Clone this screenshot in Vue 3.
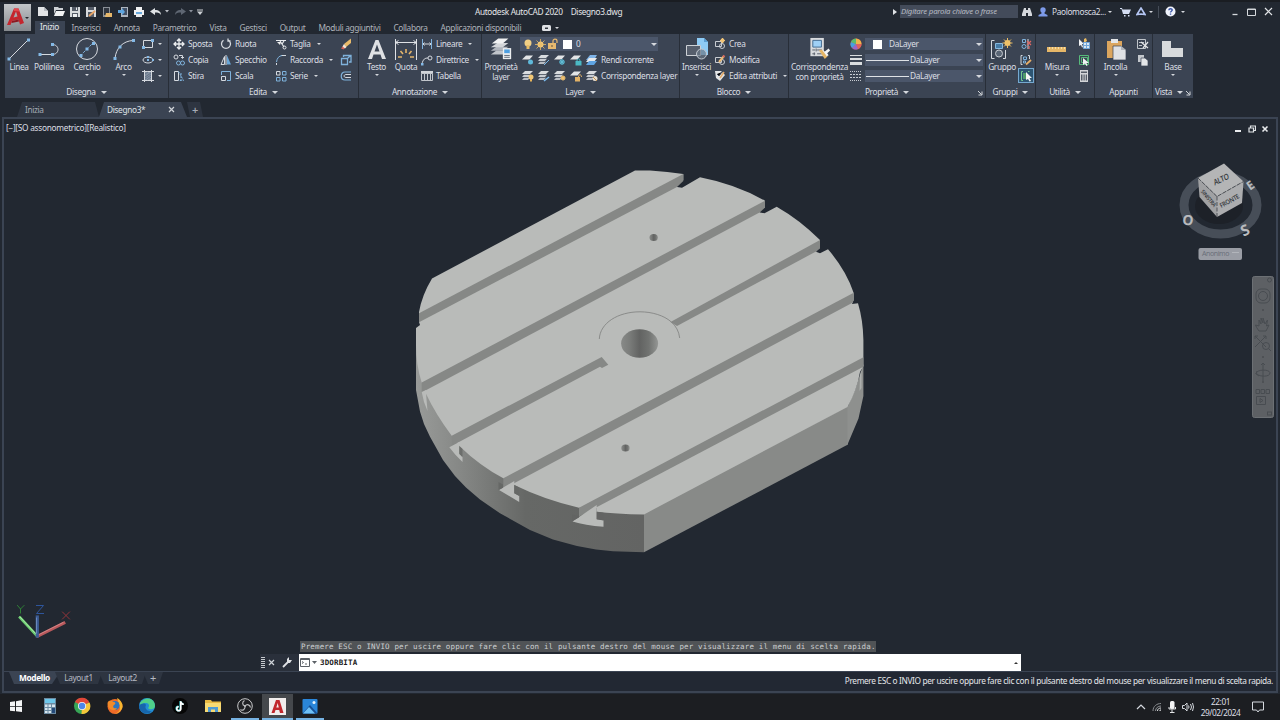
<template>
  <div class="desktop">
    <div class="window">
      <header class="titlebar">
        <div class="quick-access">
          <Icon v-for="q in quickAccess" :key="q" :name="q" :class="'qa-' + q" />
        </div>
        <div class="title">
          <span>Autodesk AutoCAD 2020</span><span>Disegno3.dwg</span>
        </div>
        <div class="search">
          <Icon name="right" />
          <div class="search-box">Digitare parola chiave o frase</div>
        </div>
        <div class="account">
          <Icon name="binoculars" />
          <Icon name="user" class="user" />
          <span class="user-name">Paolomosca2...</span>
          <i class="arrow"></i>
          <Icon name="cart" class="cart" />
          <Icon name="autodesk" class="autodesk" />
          <i class="arrow"></i>
          <i class="divider"></i>
          <Icon name="help" />
          <i class="arrow help-arrow"></i>
        </div>
        <div class="window-buttons">
          <Icon name="min" /><Icon name="max" /><Icon name="close" />
        </div>
      </header>
      <div class="app-button">
        <Icon name="logo" /><i class="arrow"></i>
      </div>

      <nav class="ribbon-tabs">
        <span
          v-for="(t, i) in tabs"
          :key="t"
          class="ribbon-tab"
          :class="{ active: i === 0 }"
          >{{ t }}</span
        >
        <Icon name="camera" class="camera" /><i class="arrow"></i>
      </nav>

      <div class="ribbon">
        <section v-for="p in panels" :key="p.id" class="panel" :class="p.id">
          <div class="panel-body">
            <template v-for="(c, i) in p.cols" :key="i">
              <div v-if="c.big" class="big" :class="'big-' + c.big">
                <Icon :name="c.big" />
                <span v-for="l in c.labels" :key="l" class="label">{{ l }}</span>
                <i v-if="c.arrow" class="arrow"></i>
              </div>
              <div v-else-if="c.rows" class="small" :class="c.id">
                <div
                  v-for="r in c.rows"
                  :key="r[0]"
                  class="row"
                  :class="{ selected: r[3] }"
                >
                  <Icon :name="r[0]" />
                  <span v-if="r[1]" class="label">{{ r[1] }}</span>
                  <i v-if="r[2]" class="arrow"></i>
                </div>
              </div>
              <div v-else-if="c.layers" class="layer-tools">
                <div class="select layer-select">
                  <Icon name="bulb" /><Icon name="sun" /><Icon name="unlock" />
                  <i class="swatch"></i><span>0</span><i class="arrow wide"></i>
                </div>
                <div v-for="r in c.layers" :key="r.label" class="row">
                  <Icon v-for="n in r.icons" :key="n" :name="n" />
                  <span class="label">{{ r.label }}</span>
                </div>
              </div>
              <div v-else class="props">
                <div class="row">
                  <Icon name="wheel" />
                  <div class="select">
                    <i class="swatch"></i><span>DaLayer</span
                    ><i class="arrow wide"></i>
                  </div>
                </div>
                <div v-for="n in ['weights', 'dashes']" :key="n" class="row">
                  <Icon :name="n" />
                  <div class="select">
                    <i class="stroke"></i><span>DaLayer</span
                    ><i class="arrow wide"></i>
                  </div>
                </div>
              </div>
            </template>
          </div>
          <div class="panel-title">
            <span>{{ p.title }}</span>
            <i v-if="p.menu" class="arrow wide"></i>
            <Icon v-if="p.launcher" name="launcher" class="launcher" />
          </div>
        </section>
      </div>

      <div class="doc-tabs">
        <div class="doc-tab">Inizia</div>
        <div class="doc-tab current">
          <span>Disegno3*</span><Icon name="tabClose" />
        </div>
        <div class="doc-tab add">+</div>
      </div>

      <main class="canvas">
        <div class="view-label">[−][SO assonometrico][Realistico]</div>
        <div class="view-buttons">
          <Icon name="viewMin" /><Icon name="viewRestore" /><Icon name="viewClose" />
        </div>

        <svg class="model" viewBox="416 169 448 385" width="448" height="385">
          <defs>
            <linearGradient id="rim" gradientUnits="userSpaceOnUse" x1="416" y1="0" x2="644" y2="0">
              <stop offset="0" stop-color="#999b99" />
              <stop offset="0.2" stop-color="#858785" />
              <stop offset="0.48" stop-color="#666866" />
              <stop offset="1" stop-color="#636463" />
            </linearGradient>
            <linearGradient id="bore">
              <stop offset="0" stop-color="#888a88" />
              <stop offset="0.22" stop-color="#7b7d7b" />
              <stop offset="0.5" stop-color="#626362" />
              <stop offset="0.75" stop-color="#717371" />
              <stop offset="1" stop-color="#949694" />
            </linearGradient>
          </defs>
          <!-- curved rim and flat cut side -->
          <path fill="url(#rim)" d="M416 340V390L420 411.500L424 424L430 436.700L443 460L455 476L466 487.500L480 499.500L500 513.300L530 530L553 539.500L577 546L596 549.500L613 551.300L644 552.300V505L500 440Z" />
          <path fill="#888a88" d="M644 513L848 406V444.500L644 552.300Z" />
          <path fill="#8e908e" d="M847.500 407L855 390L863.400 364V396L858.500 418.500L847.500 444.500Z" />
          <!-- top face -->
          <path fill="#b9bbb9" d="M432 278.500L635 170.500H650Q668 171.500 683.300 174V180L677 184.700V187L682 187.700L700 177.300Q735 184 765 200.700V207L760 210V212.500L764.500 213.300L776.700 206.700Q800 220 820 240V247L816 251.700L820 253.300L828 249.300Q846 270 853.700 293V300L852 304L858 303.300Q863 320 863.400 340V366L860 372Q857 390 847.500 407L644 514.400Q615 514 596.700 511.700V508L579 507.700Q545 500 514.300 485L503.300 478.300Q480 466 459.300 446L451.700 435.700Q436 415 425.700 393.300L421.700 382.500Q416 365 416 345V328L420 325L419 322V312Q422 295 432 278.500Z" />
          <!-- slot walls -->
          <g fill="#868886">
            <path d="M419 313.300L683.300 174V181L677 187L419 322.300Z" />
            <path d="M421.700 382.500L765 200.700V207.500L760 212.300L421.700 392.500Z" />
            <path d="M670.500 322L820 240V248.500L816 251.500L677 326Z" />
            <path d="M451.700 435.700L601.700 357L608.300 364.700L602 368L600 366.700L452 445.700Z" />
            <path d="M503.300 478.300L853.700 292.700V300.500L852 303L503.300 489Z" />
            <path d="M579 507.700L863.400 357.300V366.700L579 516.500Z" />
          </g>
          <!-- T-slot mouths on the rim -->
          <path fill="#b9bbb9" d="M421.700 392L426 390L426.300 397L427.500 411L424 402Z" />
          <path fill="#b9bbb9" d="M449.300 447.300L459.300 442V453.500L462.500 456.500V462Q455 455 449.300 447.300Z" />
          <path fill="#6c6e6c" d="M459.300 446L462.500 449V457.300L459.300 454Z" />
          <path fill="#b9bbb9" d="M499 490L514.300 481V493.300L519.200 495.700V502Z" />
          <path fill="#666866" d="M514.300 485L519.200 487.500V495.900L514.300 493.300ZM498.500 482L503 484.500V487.700L498.500 490Z" />
          <path fill="#b9bbb9" d="M572.500 521.500L596.700 505V519.300L603.500 520.300V526.700Q585 525.500 572.500 521.500Z" />
          <path fill="#636463" d="M596.700 511.700L603.500 512.700V520.500L596.700 519.300ZM572.300 514.500L579 516V517.500L572.300 521Z" />
          <path fill="#c2c4c2" d="M860 375L861.500 370V388L859.500 391Z" opacity=".6" />
          <!-- centre bore and boss -->
          <path fill="none" stroke="#7d7f7d" stroke-width=".8" d="M599.300 339C600 323 618 311.800 640 311.800C652 311.800 664 315.500 671 321.700Q678.500 328 679.700 338" />
          <ellipse cx="639.600" cy="343.500" rx="18.500" ry="14.300" fill="url(#bore)" />
          <ellipse cx="653.700" cy="237.500" rx="4.200" ry="3.500" fill="url(#bore)" />
          <ellipse cx="625.500" cy="448" rx="4.200" ry="3.500" fill="url(#bore)" />
        </svg>

        <svg class="viewcube" viewBox="1176 160 90 104" width="90" height="104">
          <ellipse cx="1220.500" cy="205" rx="36.500" ry="29" fill="none" stroke="#474e58" stroke-width="9" />
          <ellipse cx="1219" cy="206" rx="24" ry="18" fill="#1d2128" />
          <path fill="#b4b5b6" d="M1198 178L1224 163.500L1243.500 181.500L1217 196.500Z" />
          <path fill="#a0a1a3" d="M1198 178L1217 196.500V217L1199.500 197Z" />
          <path fill="#acadaf" d="M1217 196.500L1243.500 181.500L1242 203L1217 217Z" />
          <path fill="none" stroke="#3c4046" stroke-width=".8" stroke-dasharray="4 1.500" d="M1198 178L1217 196.500L1243.500 181.500M1217 196.500V217" />
          <g font-family="Open Sans, sans-serif" fill="#33373c" text-anchor="middle">
            <text font-size="8" font-weight="600" transform="translate(1222 182) rotate(-26) skewX(-8)" textLength="16" lengthAdjust="spacingAndGlyphs">ALTO</text>
            <text font-size="6.500" font-weight="600" transform="translate(1230.500 203) rotate(-29)" textLength="21" lengthAdjust="spacingAndGlyphs">FRONTE</text>
            <text font-size="5.500" font-weight="600" transform="translate(1207 199.500) rotate(50)" textLength="20" lengthAdjust="spacingAndGlyphs">SINISTRA</text>
          </g>
          <g font-family="Open Sans, sans-serif" fill="#b9bbbe" font-weight="700" text-anchor="middle">
            <text font-size="14" transform="translate(1187 225) rotate(8)">O</text>
            <text font-size="15" transform="translate(1247 235) rotate(-25)">S</text>
            <text font-size="12" transform="translate(1252.500 189) rotate(-35)">E</text>
          </g>
          <rect x="1198.500" y="248" width="43.500" height="12" rx="2" fill="#9a9da5" />
          <text x="1202" y="256.300" font-family="Open Sans, sans-serif" font-size="7" fill="#686d78" textLength="27">Anonimo</text>
          <path d="M1232 252.500h7" stroke="#b2b5bb" />
        </svg>

        <svg class="navbar" viewBox="0 0 22 142" width="22" height="142" fill="none" stroke="#484c51">
          <rect x=".5" y=".5" width="21" height="141" rx="2" fill="#5d6064" stroke="#6c7074" />
          <circle cx="17.500" cy="4" r="2" />
          <rect x="4" y="13" width="14" height="14" rx="5" />
          <circle cx="11" cy="20" r="4.500" />
          <path d="M7 55Q4 51 3.500 49L7 50V44L9 48V42L11 47V42L13 48L15.500 44L14.500 50L17 49L14 55Z" />
          <path d="M3 60L14 71M3 71L14 60M3 63V60H6M11 60H14V63" />
          <circle cx="14" cy="70" r="3.500" /><path d="M16.500 72.500L19 75" />
          <path d="M11 87V105M4 98C4 93 18 93 18 97S8 101 5 98M9 89L11 87L13 89M5 95L4 98L7 100" />
          <path d="M4 113.500h3.500v4H4zM9 113.500h3.500v4H9zM14 113.500h3.500v4H14zM4.500 120.500h9v8h-9zM8 122.500l3 2-3 2z" />
          <path d="M10.500 34h1M10.500 81h1M10.500 106h1" stroke="#35393f" stroke-width="1.500" />
          <rect x="15.500" y="136" width="4" height="3" />
        </svg>

        <svg class="ucs" viewBox="14 600 60 40" width="60" height="40">
          <g fill="none" stroke-linecap="square">
            <path d="M20 617.500L37 636" stroke="#6fce73" stroke-width="2.600" />
            <path d="M20 617L36 634" stroke="#b2f0b0" stroke-width=".8" />
            <path d="M38 636L64 623" stroke="#b9595c" stroke-width="2.800" />
            <path d="M38 635L63 622.500" stroke="#e0999a" stroke-width=".7" />
            <path d="M37.300 617V636" stroke="#3c5c96" stroke-width="3.200" />
            <path d="M36.500 618V633" stroke="#7e9ccc" stroke-width=".7" />
            <path d="M17.500 605.500L20.500 609L24 605.500M20.500 609V613" stroke="#2f7f36" />
            <path d="M36.500 605.500H43.500L36.500 613.500H43.500" stroke="#2e559b" />
            <path d="M62.500 612L69.500 619M69.500 612L62.500 619" stroke="#93343a" />
          </g>
        </svg>

        <div class="command">
          <div class="history">Premere ESC o INVIO per uscire oppure fare clic con il pulsante destro del mouse per visualizzare il menu di scelta rapida.</div>
          <div class="command-line">
            <div class="handle"><i class="grip"></i><Icon name="tabClose" /><Icon name="wrench" /></div>
            <div class="prompt"><Icon name="console" /><span>3DORBITA</span><i class="up"></i></div>
          </div>
        </div>
      </main>

      <footer class="statusbar">
        <div class="layout-tabs">
          <span class="layout-tab current">Modello</span>
          <span class="layout-tab">Layout1</span>
          <span class="layout-tab">Layout2</span>
          <span class="layout-tab plus">+</span>
        </div>
        <div class="hint">Premere ESC o INVIO per uscire oppure fare clic con il pulsante destro del mouse per visualizzare il menu di scelta rapida.</div>
      </footer>
    </div>

    <div class="taskbar">
      <div
        v-for="t in tasks"
        :key="t.icon"
        class="task"
        :class="{ open: t.open, focused: t.focused }"
      >
        <Icon :name="t.icon" />
      </div>
      <div class="tray">
        <Icon name="chevron" /><Icon name="wifi" /><Icon name="mic" /><Icon name="speaker" />
        <div class="clock"><span>22:01</span><span>29/02/2024</span></div>
        <Icon name="notify" />
      </div>
    </div>
  </div>
</template>

<script setup>
import { h } from "vue";

const S = 'fill="none" stroke="#d5d9df"';
const B = 'fill="none" stroke="#7fb2dc"';
const sheets = '<path fill="#d9dcdf" d="M3 1h8L8 4H0z"/><path fill="#c9cdd3" d="M2 4.800h7L7 7H0z"/><path fill="#b9bdc4" d="M2 7.800h6L6 10H0z"/>';
const oneSheet = '<path fill="#e3e5e7" d="M4 1.500h7L7.500 5.500H0z"/>';
const blockBase = '<path fill="none" stroke="#c8ccd2" d="M1.500 3.500h6v5h-6z"/><circle cx="8" cy="8" r="2.500" fill="none" stroke="#c8ccd2"/>';
const pencil = '<path d="M5 8L10 2" stroke="#e8bb78" stroke-width="2"/><path d="M9 3l1.500-1.500" stroke="#d9685f" stroke-width="2"/>';

// name: [width, height, markup]
const icons = {
  logo: [20, 24, '<path fill="#c4262e" d="M2 19L9 2.500h4.500L19 17l-4 1.500-1.500-5L7 15l-1.500 4zM8.500 11.500l4-1L11 5.500z"/><path fill="#e2474c" d="M9 2.500h4.500l1 3L9 5z"/><path fill="#8e1820" d="M7 15l6.500-1.500.500 2L6.500 17z"/>'],
  right: [4, 6, '<path fill="#dfe2e6" d="M0 0l4 3-4 3z"/>'],
  new: [12, 11, '<path fill="#e2e4e6" d="M1 1h6l4 4v5H1z"/><path fill="#b8bcc2" d="M7 1v4h4z"/>'],
  open: [12, 11, '<path fill="#cdd0d4" d="M1 1h4l1 1h4v2H3L1 8z"/><path fill="#f0f1f2" d="M3 5h9l-2 5H1z"/>'],
  save: [12, 12, '<path fill="#d7dadd" d="M1 1h10v10H1z"/><path fill="#545b67" d="M3 1h6v4H3zM3 7h6v4H3z"/><path fill="#eceef0" d="M4 8h4v3H4zM7 1.500h1v2.500H7z"/>'],
  saveas: [12, 12, '<path fill="#d7dadd" d="M1 1h10v10H1z"/><path fill="#545b67" d="M3 1h6v3H3zM3 6h6v5H3z"/><path d="M4 10l6-5" stroke="#e6a467" stroke-width="2"/>'],
  fromweb: [12, 12, '<path fill="#8a8f97" d="M2 1h7v10H2z"/><path fill="#303640" d="M3 2h5v7H3z"/><path fill="#e6b76a" d="M5 7h6v4H4z"/>'],
  toweb: [12, 12, '<path fill="#aeb5bf" d="M4 1h7v10H4z"/><path fill="#415066" d="M5 2h5v7H5z"/><path fill="#5fa6e0" d="M1 4h4V2l3 4-3 3V7H1z"/>'],
  print: [12, 12, '<path fill="#f1f2f3" d="M3 1h6v3H3zM1 4h10v5H1z"/><path fill="#68a9dc" d="M3 6h6v4H3z"/><path fill="#e9ebed" d="M3 8h6v3H3z"/>'],
  undo: [12, 10, '<path fill="#dfe2e5" d="M0 4.500L5 1v2c4 0 6 2 6 5C10 6 8 5.500 5 5.500V8z"/>'],
  redo: [12, 10, '<path fill="#5e6672" d="M12 4.500L7 1v2C3 3 1 5 1 8c1-2 3-2.500 6-2.500V8z"/>'],
  drop: [4, 3, '<path fill="#b9bdc4" d="M0 0h4L2 2.500z"/>'],
  drop2: [4, 3, '<path fill="#8b919b" d="M0 0h4L2 2.500z"/>'],
  more: [6, 6, '<path stroke="#ced1d6" d="M0 1h6"/><path fill="#ced1d6" d="M0 2.500h6L3 6z"/>'],
  binoculars: [10, 10, '<path fill="#d5d8dd" d="M2 1h2v2h2V1h2l2 6v2H6V6H4v3H0V7z"/>'],
  user: [10, 10, '<circle cx="5" cy="3" r="2.700" fill="#7d9ae8"/><path fill="#7d9ae8" d="M3.500 5h3v1.500L9.500 8v1.500H.500V8l3-1.500z"/>'],
  cart: [11, 10, '<path fill="#d5def2" d="M0 1h2l.500 1.500H11L9 7H3L1.500 2H0zM4 8h1.500v1.500H4zM8 8h1.500v1.500H8z"/>'],
  autodesk: [10, 9, '<path fill="none" stroke="#b5c6f3" stroke-width="1.600" d="M1 7.500L5 1l4 6.500L5 7z"/>'],
  help: [11, 11, '<circle cx="5.500" cy="5.500" r="5" fill="#f0f3fb"/><path fill="none" stroke="#3a56a8" stroke-width="1.400" d="M3.800 4.200C4 2.200 7.300 2.300 7.200 4.200 7 5.300 5.500 5.300 5.500 6.600M5.500 7.600v1.200"/>'],
  min: [8, 8, '<path stroke="#d5d8dc" stroke-width="1.300" d="M1.500 6.500h5"/>'],
  max: [9, 8, '<path fill="none" stroke="#d5d8dc" d="M.500 1h8v6.500h-8zM.500 1.500h8"/>'],
  close: [9, 9, '<path stroke="#e3e5e8" stroke-width="1.200" d="M1 1l7 7M8 1L1 8"/>'],
  camera: [9, 6, '<rect width="9" height="6" rx="1.500" fill="#dfe1e5"/><path fill="#30363f" d="M3 2.500h3v1.500H3z"/>'],
  line: [24, 24, `<path ${S} d="M2 22L21 3"/><path fill="#84b9e6" d="M.500 20.500h3v3h-3zM20 1.500h3v3h-3z"/>`],
  polyline: [24, 24, `<path ${S} d="M3 17.500h12c8 0 8-10 0-10"/><path fill="#84b9e6" d="M1.500 16h3v3h-3zM14 16h3v3h-3zM14 6h3v3h-3z"/>`],
  circle: [24, 24, `<circle cx="12" cy="12" r="10.500" ${S}/><path ${B} stroke-dasharray="3 1.500" d="M5 19L19 5"/><path fill="#84b9e6" d="M10.500 10.500h3v3h-3zM17 5h3v3h-3zM4.500 17h3v3h-3z"/>`],
  arc: [24, 24, `<path ${S} d="M3 21.500C4 11 11 4 21 3.500"/><path fill="#84b9e6" d="M1.500 20h3v3h-3zM6.500 8.500h3v3h-3zM20 2h3v3h-3z"/>`],
  rect: [12, 12, `<path ${S} d="M1.500 2.500h9v7h-9z"/><path fill="#84b9e6" d="M0 8h3v3H0zM9 1h3v3H9z"/>`],
  ellipse: [12, 12, `<ellipse cx="6" cy="6" rx="5" ry="3" ${S}/><path fill="#84b9e6" d="M5 5h2v2H5zM5 2h2v2H5zM10 5h2v2h-2z"/>`],
  hatch: [12, 12, `<path fill="#8592a3" d="M3 2h6v8H3z"/><path ${S} d="M2.500 0v12M9.500 0v12M0 1.500h12M0 10.500h12"/><path stroke="#56657a" stroke-width=".7" d="M3 4l3-2M3 7l6-4M3 9l6-4M5 10l4-3"/>`],
  move: [12, 12, '<path fill="none" stroke="#eceef0" stroke-width="1.300" d="M6 1v10M1 6h10M4 3l2-2 2 2M4 9l2 2 2-2M3 4L1 6l2 2M9 4l2 2-2 2"/>'],
  copy: [12, 12, `<circle cx="3" cy="3" r="2" ${S}/><path ${S} d="M6 1.500h3.500V4M8 3l1.500 1.500L11 3"/><circle cx="5.500" cy="9" r="2" ${B}/><circle cx="9.500" cy="9" r="2" ${B}/>`],
  stretch: [12, 12, `<path ${S} d="M1.500 1.500h4v9h-4z"/><path ${B} stroke-dasharray="2 1" d="M5.500 1.500l5 9h-5M8 3v7"/>`],
  rotate: [12, 12, `<path ${S} stroke-width="1.300" d="M8.500 2.200A4.500 4.500 0 1 1 3.500 2.200M8 .500v2.500h2.500"/>`],
  mirror: [12, 12, `<path ${S} d="M4.500 2.500v8H1z"/><path fill="#68a6d8" d="M7 1.500v9h4z"/><path fill="#e1e4e8" d="M5.500 1h1v10h-1z"/>`],
  scale: [12, 12, `<path ${S} d="M1.500 6.500h4v4h-4z"/><path ${B} d="M1.500 5V1.500h9v9H7"/>`],
  trim: [12, 12, '<path fill="none" stroke="#e9ebee" stroke-width="1.200" d="M1 2.500h10M5 3l4 6M9 3L7 6"/><circle cx="9.500" cy="9.500" r="1.500" fill="none" stroke="#e9ebee"/><path fill="#eee" d="M2 4h4l-1 3z"/>'],
  fillet: [12, 12, `<path ${S} d="M1.500 11V9M6 1.500h5"/><path ${B} d="M1.500 8C2 4 4 2 7 1.500"/>`],
  array: [12, 12, `<path ${S} d="M1.500 1.500h3.500v3.500h-3.500z"/><path ${B} d="M7.500 1.500H11V5H7.500zM1.500 7.500H5V11H1.500zM7.500 7.500H11V11H7.500z"/>`],
  erase: [12, 12, '<path fill="#e9bb6a" d="M4 6L11 .500V5L6 9z"/><path fill="#d86458" d="M1 10.500L3 8l2 2-1.500 1.500z"/><path fill="#f6e6d5" d="M2.500 8.500L4 6 6.500 9 5 10.500z"/>'],
  explode: [12, 12, `<path ${B} stroke-width="1.300" d="M1.500 4.500h6v6h-6zM3.500 3V1.500H11V8H9M7.500 4.500l3-3"/>`],
  offset: [12, 12, `<path ${B} stroke-width="1.200" d="M11 2H5C0 2 0 10 5 10h6"/><path ${S} d="M11 4.500H6C3.500 4.500 3.500 7.500 6 7.500h5"/>`],
  text: [24, 24, '<path fill="#dfe1e4" d="M3 22L10.500 3h3L21 22h-4l-1.500-4.500h-7L7 22zM9.500 14.500h5L12 7.500z"/>'],
  dim: [24, 24, '<path fill="none" stroke="#dfe2e6" d="M1.500 2v21M22.500 2v21M2 5.500h20M4.500 3.500l-3 2 3 2M19.500 3.500l3 2-3 2"/><path stroke="#e5b56b" stroke-width="1.600" d="M12 12v4M6.500 14l2.500 3M17.500 14L15 17M4 20h4M16 20h4"/>'],
  linear: [12, 12, `<path ${B} d="M1.500 1v10M10.500 1v10"/><path ${S} d="M2 6h8M3.500 4.500L2 6l1.500 1.500M8.500 4.500L10 6 8.500 7.500"/>`],
  leader: [12, 12, `<path ${S} d="M1 10C2 5 4 4 7 4"/><circle cx="9" cy="4" r="2" ${S}/><path fill="#84b9e6" d="M0 9h2.500v2.500H0z"/>`],
  table: [12, 12, '<path fill="#cfd3d8" d="M0 1h12v2.500H0z"/><path fill="none" stroke="#c1c5cb" d="M.500 3.500h11v7h-11zM3.500 4v7M6.500 4v7M9.500 4v7"/>'],
  layerprops: [24, 26, '<path fill="#c0c4ca" d="M7 14.500h13l-5 4.500H1z"/><path fill="#b0b5bd" d="M7 10.500h13L14 15H1z"/><path fill="#d2d5d9" d="M8 6.500h12l-6 4.500H1z"/><path fill="#f0f1f2" d="M9 1.500h11L14 7H2z"/><path fill="#eceef0" d="M14 12h9v12h-9z"/><path fill="#4e9fe0" d="M15.500 13.500h6v4h-6z"/><path stroke="#5a6270" d="M15.500 20h6M15.500 22h6"/>'],
  bulb: [10, 11, '<circle cx="5" cy="4" r="3.500" fill="#f1cf85"/><path fill="#e7bd68" d="M3.500 6h3v4h-3z"/>'],
  sun: [11, 11, '<circle cx="5.500" cy="5.500" r="3" fill="#f1ca7c"/><path stroke="#e9bd68" stroke-width=".8" d="M5.500 0v11M0 5.500h11M1.500 1.500l8 8M9.500 1.500l-8 8"/>'],
  unlock: [10, 12, '<path fill="#e6b96f" d="M0 5h8v6H0z"/><path fill="none" stroke="#e6b96f" stroke-width="1.200" d="M5 5V3c0-2.500 4-2.500 4 0v2"/><path fill="#5d5344" d="M3.500 7h1v2h-1z"/>'],
  lyOff: [12, 12, oneSheet + '<circle cx="8.500" cy="8" r="2.500" fill="#5fb9da"/>'],
  lyIso: [12, 12, sheets + '<path stroke="#79b5e4" d="M6 11l5-5"/>'],
  lyFreeze: [12, 12, oneSheet + '<circle cx="8" cy="8" r="2.700" fill="#468ba5"/><path stroke="#63bfd5" stroke-width=".8" d="M8 5v6M5 8h6M6 6l4 4M10 6l-4 4"/>'],
  lyLock: [12, 12, oneSheet + '<path fill="#4bb9c5" d="M5.500 7h6v4.500h-6z"/><path fill="none" stroke="#4bb9c5" d="M7 7c0-3 3-3 3 0"/>'],
  lyCurrent: [12, 12, '<path fill="#7fb4e8" d="M4 1h7L8 6H0z"/><path fill="#e7e9eb" d="M3 4h8L8 8H0z"/><path fill="#5fa4e2" d="M3 7h8l-3 4H0z"/>'],
  lyOn: [12, 12, sheets + '<circle cx="9" cy="7" r="2.500" fill="#f0c776"/><path fill="#e8b55c" d="M8 9h2v2.500H8z"/>'],
  lyUniso: [12, 12, sheets + '<path stroke="#7bbcf0" stroke-width="1.500" d="M6 11l5-4"/>'],
  lyThaw: [12, 12, sheets + '<circle cx="9" cy="8" r="2" fill="#eec070"/><path stroke="#eec070" stroke-width=".7" d="M9 5v6M6 8h6M7 6l4 4M11 6l-4 4"/>'],
  lyUnlock: [12, 12, oneSheet + '<path fill="#e2b267" d="M5 7h5v4.500H5z"/><path fill="none" stroke="#e2b267" d="M8.500 7c0-3 3-3 3 0"/>'],
  lyMatch: [12, 12, sheets + '<circle cx="9" cy="8.500" r="2.500" fill="#e9e1d2"/><path stroke="#c18d4e" d="M7 7l4 4"/>'],
  insert: [24, 24, '<path fill="#8ecbf5" d="M12 1h7l4 4v13H12z"/><path fill="#5b9fd4" d="M19 1v4h4z"/><path fill="#565e6c" stroke="#cdd1d6" d="M1.500 8.500h14v10h-14z"/><circle cx="16.500" cy="17" r="5" fill="#6b7787" fill-opacity=".7" stroke="#c5cbd3"/>'],
  create: [12, 12, blockBase + '<path stroke="#f0c478" stroke-width="1.200" d="M8.500 0v5M6 2.500h5M7 1l3 3M10 1L7 4"/>'],
  modify: [12, 12, blockBase + pencil],
  attrs: [12, 12, '<path fill="#e4e6e8" d="M1 1h6l4 4-5 6-4-3z"/><path stroke="#e5aa67" stroke-width="1.500" d="M6 8l4-6"/><path stroke="#3d4553" d="M3 4l2 2 3-4"/>'],
  matchprop: [24, 25, '<path fill="#d9dbde" d="M2 1h14v19H2z"/><path fill="#9fd0f6" stroke="#426a91" d="M4.500 3.500h9v7h-9z"/><path stroke="#59606c" d="M4 13.500h3M9 13.500h5M4 17.500h3M9 17.500h5M8 12v3M6 16v3"/><path fill="#e5b565" d="M11 14l3-1 6 7-3 3z"/><path fill="#f4f4f4" d="M14 13l3 2 4-3 1.500 2-3 3 1.500 2-2 1z"/>'],
  wheel: [12, 12, '<circle cx="6" cy="6" r="5.500" fill="#e25d4b"/><path fill="#efb24b" d="M6 6L6 .500A5.500 5.500 0 0 1 11.500 6z"/><path fill="#e2645a" d="M6 6h5.500A5.500 5.500 0 0 1 8 11z"/><path fill="#9867c8" d="M6 6L8 11A5.500 5.500 0 0 1 2 10z"/><path fill="#44a1e0" d="M6 6L2 10A5.500 5.500 0 0 1 1 4z"/><path fill="#58bd6e" d="M6 6L1 4A5.500 5.500 0 0 1 6 .500z"/>'],
  weights: [12, 12, '<path fill="#d9dcdf" d="M0 1h12v1H0zM0 4h12v2H0zM0 8h12v3H0z"/>'],
  dashes: [12, 12, '<path fill="none" stroke="#c8ccd2" stroke-dasharray="2 1" d="M0 4.500h12M0 7.500h12"/><path fill="none" stroke="#c8ccd2" stroke-dasharray="1 1" d="M0 1.500h12M0 10.500h12"/>'],
  launcher: [6, 6, '<path fill="none" stroke="#d5d8dc" d="M1 1l3.500 3.500M5 1.500V5H1.500"/>'],
  group: [24, 24, `<path ${S} d="M4.500 3.500h-3v18h3M13 21.500h2.500V13"/><path fill="#477ba5" stroke="#87b9df" d="M5.500 6.500h7v5h-7z"/><circle cx="9" cy="16.500" r="3.500" fill="#596575" stroke="#c6cad0"/><circle cx="17.500" cy="6" r="3" fill="#f1c66c"/><path stroke="#edbf66" d="M17.500 1v10M12.500 6h10M14 2.500l7 7M21 2.500l-7 7"/>`],
  ungroup: [12, 12, `<path ${B} d="M2.500 1.500h3v3h-3z"/><circle cx="4" cy="8.500" r="2" ${B}/><path ${S} d="M8 1v10"/><path stroke="#dd6864" stroke-width="1.200" d="M7 3l4 4M11 3L7 7M9 8v3"/>`],
  groupedit: [12, 12, `<path ${S} d="M2.500 1.500H1v9h1.500M8 1.500h1.500V5"/><path ${B} d="M3.500 3h3v2.500h-3zM3.500 7h2v2h-2z"/><path stroke="#e6ae68" stroke-width="1.800" d="M6 10.500L11 6"/>`],
  groupsel: [13, 12, '<path fill="none" stroke="#74c790" d="M3 1.500H1.500v9H3M8 1.500h1.500"/><path fill="#4e9b6b" d="M3 3h4v6H3z"/><path fill="#f4f5f6" d="M6 2l6 6H9.500l1.500 3-1.500.500L8 9 6 10z"/>'],
  measure: [24, 24, '<path fill="#e6b768" d="M2 10h19v5H2z"/><path stroke="#f7dda7" d="M4.500 10v2M7.500 10v2M10.500 10v2M13.500 10v2M16.500 10v2M19.500 10v2"/>'],
  selall: [12, 12, '<path fill="#f2f3f4" d="M1 1l5 5H4l1 3-1 .500L3 7 1 8z"/><path fill="#edbd63" d="M6 1l2-1 1 3-3 2z"/><path fill="#d9e6f2" stroke="#72a6d8" d="M5.500 4.500h6v6h-6zM8.500 4.500v6M5.500 7.500h6"/>'],
  quickselect: [12, 12, '<path fill="none" stroke="#58ba7b" d="M1.500 1.500h9v9h-9zM3.500 3.500h6v5h-6z"/><path fill="#f1f3f4" d="M5 4l6 5H8.500l1 2.500-1 .500-1.500-2.500L5 11z"/>'],
  calc: [12, 12, '<path fill="#d3d5d8" d="M2 0h8v12H2z"/><path fill="#555c67" d="M3 1.500h6V3H3zM3 4.500h1.500v6H3zM5.500 4.500h1.200v6H5.500zM7.700 4.500H9v6H7.700z"/>'],
  paste: [24, 24, '<path fill="#dca65e" d="M3 4h15v17H3z"/><path fill="#e4e6e8" d="M7 2h7v4H7z"/><path fill="#dfe1e4" stroke="#3b4453" stroke-width=".7" d="M9 9h8l5 4v10H9z"/><path fill="#aeb3ba" d="M17 9v4h5z"/>'],
  cut: [12, 12, '<path fill="none" stroke="#bfc4ca" d="M.500 1.500h8v9h-8zM2 4.500h5M2 7.500h3"/><path stroke="#e4e6e8" stroke-width="1.200" d="M4 4l7 6M11 4L6 10"/>'],
  clip: [12, 12, '<path fill="#c3c7cc" d="M1 1h6v7H1z"/><path fill="#e4e6e8" stroke="#3b4453" stroke-width=".700" d="M4 4h4l3 2.500V12H4z"/>'],
  base: [24, 24, '<path fill="#d8dadc" d="M1 4h9v7h12v9H1z"/>'],
  tabClose: [7, 7, '<path stroke="#d0d4d9" stroke-width="1.200" d="M1 1l5 5M6 1L1 6"/>'],
  viewMin: [8, 8, '<path fill="#e9ebed" d="M1 5h6v2H1z"/>'],
  viewRestore: [8, 8, '<path fill="none" stroke="#e0e3e6" stroke-width="1.200" d="M1 3h4.500v4H1zM2.500 3V1h5v4.500H6"/>'],
  viewClose: [8, 8, '<path stroke="#e9ebed" stroke-width="1.600" d="M1.500 1.500l5 5M6.500 1.500l-5 5"/>'],
  wrench: [10, 11, '<path fill="none" stroke="#dfe2e5" stroke-width="1.800" d="M1 10l5-5"/><path fill="#dfe2e5" d="M5 5V2l2-2v3h3L8 6H6z"/>'],
  console: [17, 9, '<path fill="none" stroke="#5c6167" d="M.500.500h9v8h-9zM.500 1.500h9M2 3.500l1.500 1L2 5.500M5 6h2"/><path fill="#5c6167" d="M12 3h5l-2.500 3z"/>'],
  windows: [14, 14, '<path fill="#f4f5f6" d="M1 3l5-.700V7H1zM7 2.200L13 1v6H7zM1 7.800h5v4.500L1 11.700zM7 7.800h6V13l-6-.800z"/>'],
  calculator: [16, 18, '<path fill="#6c8ba2" d="M2 1h12v16H2z"/><path fill="#6ec7ea" d="M3 2h10v4H3z"/><path fill="#d7e5ee" d="M3 7.500h2.500V10H3zM6.500 7.500H9V10H6.500zM10 7.500h3V10h-3zM3 11h2.500v2H3zM6.500 11H9v2H6.500zM3 14h2.500v2H3zM6.500 14H9v2H6.500z"/><path fill="#254a7a" d="M10 11h3v5h-3z"/>'],
  chrome: [18, 18, '<circle cx="9" cy="9" r="8" fill="#37a556"/><path fill="#e24638" d="M9 9L2 5A8 8 0 0 1 16.300 5.500z"/><path fill="#f5c63a" d="M9 9L16.500 5.500A8 8 0 0 1 8.500 17z"/><circle cx="9" cy="9" r="4" fill="#f5f5f5"/><circle cx="9" cy="9" r="3.200" fill="#4c86ea"/>'],
  firefox: [18, 18, '<circle cx="9" cy="9.500" r="7.500" fill="#ee6b28"/><path fill="#f8b62f" d="M11 1c4 2 6 6 5.500 9S12 17 9 17c3-2 5-3 5-6S12 5 11 1z"/><circle cx="9" cy="8.500" r="4.500" fill="#2d75bf"/><path fill="#f28a29" d="M1.500 6C3 3 5 3 7 5c3 0 3 2 1 3-2 2 0 4 3 3-2 4-8 2-9-2z"/>'],
  edge: [18, 18, '<circle cx="9" cy="9" r="8" fill="#228ed5"/><path fill="#4fd08a" d="M2 6C6-1 17 0 17 9c0 4-6 4-7 2 2-2 1-5-2-5-2 0-4 0-6 3z"/><path fill="#1766ac" d="M1 9C3 6 7 6 8 8c-2 4 2 7 6 6-4 5-13 2-13-5z"/>'],
  tiktok: [18, 18, '<circle cx="9" cy="9" r="8" fill="#060606"/><path fill="none" stroke="#43cfd0" stroke-width="1.800" d="M9.300 4v7.500a2 2 0 1 1-2-2M9.300 4.500c.500 2 2 2.500 3 2.500"/><path fill="none" stroke="#fff" stroke-width="1.600" d="M9.800 4.300v7.500a2 2 0 1 1-2-2M9.800 4.800c.500 2 2 2.500 3 2.500"/>'],
  explorer: [18, 16, '<path fill="#e7b843" d="M1 2h6l1 1.500h9V14H1z"/><path fill="#f7da73" d="M1 5h16v9H1z"/><path fill="#4e9ad4" d="M4 9h10v5h-3v-2.500H7V14H4z"/>'],
  obs: [18, 18, '<circle cx="9" cy="9" r="7.300" fill="#1f2023" stroke="#c9cacc"/><path fill="none" stroke="#bcbdbf" stroke-width="1.200" d="M9 9C6 8 6 5 8.500 3.500M9 9c2-2.200 5-1.500 5.500 1.500M9 9c.500 3-2 5-4.800 3.800"/><circle cx="9" cy="9" r="1" fill="#bcbdbf"/>'],
  acad: [17, 17, '<path fill="#f1eded" d="M0 0h17v17H0z"/><path fill="#c1272d" d="M2.500 15L7 2h3.500l4 13H11l-.800-3H6.500l-1 3zM7.300 9.500h2.500L8.700 5z"/>'],
  photos: [16, 16, '<rect x=".500" y="1" width="15" height="14.500" rx="1" fill="#2a86d9"/><path fill="#174f94" d="M.500 15.500L8 7l7.500 8.500z"/><path fill="#6fc0f6" d="M1 15.500L7 9l6 6.500z"/><circle cx="12" cy="4.500" r="1.500" fill="#e8f4fc"/>'],
  chevron: [10, 6, `<path ${S} stroke-width="1.200" d="M1 5l4-4 4 4"/>`],
  wifi: [10, 10, '<path fill="none" stroke="#8b8e92" d="M1 9C1 4 5 1.500 9 1.500M3.500 9c0-3 2.500-5 5.500-5"/><path fill="none" stroke="#e0e2e4" d="M5.500 9c0-2 1.500-3 3.500-3M8 9V8h1"/>'],
  mic: [8, 12, '<rect x="2" y="0" width="4.500" height="8" rx="1.500" fill="#f3f4f5"/><path fill="none" stroke="#e3e5e7" d="M1 6v2h6.500V6M4 8.500V11M2 11.500h4.500"/>'],
  speaker: [12, 10, `<path ${S} d="M.500 3.500h2L5 1v8L2.500 6.500h-2zM6.500 3.500q1 1.500 0 3M8.500 2q2 3 0 6M10.500 1q2 4 0 8"/>`],
  notify: [12, 12, `<path ${S} d="M.500 1h11v8h-4L6 11 4.500 9h-4z"/>`],
};

const Icon = (props) => {
  const [w, ht, markup] = icons[props.name];
  return h("svg", {
    class: "icon",
    width: w,
    height: ht,
    viewBox: `0 0 ${w} ${ht}`,
    innerHTML: markup,
  });
};
Icon.props = ["name"];

const quickAccess = [
  "new", "open", "save", "saveas", "fromweb", "toweb", "print",
  "undo", "drop", "redo", "drop2", "more",
];

const tabs = [
  "Inizio", "Inserisci", "Annota", "Parametrico", "Vista", "Gestisci",
  "Output", "Moduli aggiuntivi", "Collabora", "Applicazioni disponibili",
];

// small rows: [icon, label, has arrow, selected]
const panels = [
  {
    id: "disegna", title: "Disegna", menu: true,
    cols: [
      { big: "line", labels: ["Linea"] },
      { big: "polyline", labels: ["Polilinea"] },
      { big: "circle", labels: ["Cerchio"], arrow: true },
      { big: "arc", labels: ["Arco"], arrow: true },
      { id: "shapes", rows: [["rect", "", true], ["ellipse", "", true], ["hatch", "", true]] },
    ],
  },
  {
    id: "edita", title: "Edita", menu: true,
    cols: [
      { id: "edit-a", rows: [["move", "Sposta"], ["copy", "Copia"], ["stretch", "Stira"]] },
      { id: "edit-b", rows: [["rotate", "Ruota"], ["mirror", "Specchio"], ["scale", "Scala"]] },
      { id: "edit-c", rows: [["trim", "Taglia", true], ["fillet", "Raccorda", true], ["array", "Serie", true]] },
      { id: "edit-d", rows: [["erase"], ["explode"], ["offset"]] },
    ],
  },
  {
    id: "annotazione", title: "Annotazione", menu: true,
    cols: [
      { big: "text", labels: ["Testo"], arrow: true },
      { big: "dim", labels: ["Quota"] },
      { id: "notes", rows: [["linear", "Lineare", true], ["leader", "Direttrice", true], ["table", "Tabella"]] },
    ],
  },
  {
    id: "layer", title: "Layer", menu: true,
    cols: [
      { big: "layerprops", labels: ["Proprietà", "layer"] },
      {
        layers: [
          { label: "Rendi corrente", icons: ["lyOff", "lyIso", "lyFreeze", "lyLock", "lyCurrent"] },
          { label: "Corrispondenza layer", icons: ["lyOn", "lyUniso", "lyThaw", "lyUnlock", "lyMatch"] },
        ],
      },
    ],
  },
  {
    id: "blocco", title: "Blocco", menu: true,
    cols: [
      { big: "insert", labels: ["Inserisci"], arrow: true },
      { id: "blocks", rows: [["create", "Crea"], ["modify", "Modifica"], ["attrs", "Edita attributi", true]] },
    ],
  },
  {
    id: "proprieta", title: "Proprietà", menu: true, launcher: true,
    cols: [{ big: "matchprop", labels: ["Corrispondenza", "con proprietà"] }, {}],
  },
  {
    id: "gruppi", title: "Gruppi", menu: true,
    cols: [
      { big: "group", labels: ["Gruppo"] },
      { id: "groups", rows: [["ungroup"], ["groupedit"], ["groupsel", "", false, true]] },
    ],
  },
  {
    id: "utilita", title: "Utilità", menu: true,
    cols: [
      { big: "measure", labels: ["Misura"], arrow: true },
      { id: "utils", rows: [["selall"], ["quickselect"], ["calc"]] },
    ],
  },
  {
    id: "appunti", title: "Appunti",
    cols: [
      { big: "paste", labels: ["Incolla"], arrow: true },
      { id: "clips", rows: [["cut"], ["clip"]] },
    ],
  },
  {
    id: "vista", title: "Vista", menu: true, launcher: true,
    cols: [{ big: "base", labels: ["Base"], arrow: true }],
  },
];

const tasks = [
  { icon: "windows" },
  { icon: "calculator" },
  { icon: "chrome" },
  { icon: "firefox" },
  { icon: "edge" },
  { icon: "tiktok" },
  { icon: "explorer" },
  { icon: "obs", open: true },
  { icon: "acad", open: true, focused: true },
  { icon: "photos", open: true },
];
</script>

<style>
body {
  background: #191c22;
  overflow: hidden;
}
</style>

<style scoped>
.desktop {
  width: 1280px;
  height: 720px;
  display: flex;
  flex-direction: column;
  font-family: "Noto Sans", "Open Sans", sans-serif;
  font-size: 8.3px;
  line-height: 10px;
  letter-spacing: -0.35px;
  color: #dcdfe4;
  white-space: nowrap;
  background: #1b1e25;
}
.window {
  position: relative;
  box-sizing: border-box;
  height: 694px;
  display: flex;
  flex-direction: column;
  background: #222831;
  border-top: 2px solid #1a1d22;
}
.icon {
  flex: none;
  display: block;
}
.arrow {
  flex: none;
  border: 2px solid transparent;
  border-top-color: #d5d8dd;
  border-bottom: 0;
}
.arrow.wide {
  border-width: 3px 3px 0;
}

/* title bar */
.titlebar {
  height: 19px;
  display: flex;
  align-items: center;
}
.quick-access {
  width: 438px;
  padding-left: 37px;
  display: flex;
  align-items: center;
  gap: 4px;
}
.qa-undo {
  margin-left: 1px;
}
.qa-drop,
.qa-drop2 {
  margin-left: -1px;
}
.qa-redo {
  margin-left: 1px;
}
.title {
  width: 418px;
  display: flex;
  gap: 8px;
  color: #e4e6e9;
}
.search {
  width: 125px;
  display: flex;
  align-items: center;
  gap: 3px;
}
.search-box {
  width: 118px;
  height: 13px;
  line-height: 13px;
  background: #434b5a;
  color: #b6bac2;
  font-style: italic;
  font-size: 7.8px;
  letter-spacing: -0.2px;
  text-indent: 1px;
}
.account {
  width: 209px;
  padding-left: 4px;
  display: flex;
  align-items: center;
}
.user {
  margin: 0 4px 0 6px;
}
.user-name {
  width: 56px;
}
.cart {
  margin: 0 5px 0 8px;
}
.autodesk {
  margin-right: 3px;
}
.divider {
  width: 1px;
  height: 12px;
  margin: 0 6px 0 5px;
  background: #454c57;
}
.help-arrow {
  margin-left: 5px;
}
.window-buttons {
  display: flex;
  align-items: center;
  gap: 8px;
}
.app-button {
  position: absolute;
  left: 4px;
  top: 2px;
  box-sizing: border-box;
  width: 27px;
  height: 27px;
  padding-left: 1px;
  display: flex;
  align-items: center;
  background: linear-gradient(#c2c5c8, #85898e);
}
.app-button .arrow {
  border-top-color: #22262c;
}

/* ribbon tabs */
.ribbon-tabs {
  height: 13px;
  padding-left: 35px;
  display: flex;
  align-items: center;
  color: #aeb3bb;
}
.ribbon-tab {
  padding: 0 6.5px;
  line-height: 12px;
}
.ribbon-tab.active {
  padding: 0 6px 0 5px;
  height: 13px;
  background: #3b4453;
  color: #e4e7ea;
}
.camera {
  margin: 0 4px 0 14px;
}

/* ribbon */
.ribbon {
  height: 64px;
  padding-left: 5px;
  display: flex;
}
.panel {
  box-sizing: border-box;
  display: flex;
  flex-direction: column;
  background: #3b4453;
  border-right: 1px solid #282e38;
}
.panel-body {
  height: 52px;
  display: flex;
}
.panel-title {
  position: relative;
  display: flex;
  align-items: center;
  justify-content: center;
  gap: 5px;
  height: 12px;
}
.launcher {
  position: absolute;
  right: 2px;
  top: 4px;
}
.big {
  display: flex;
  flex-direction: column;
  align-items: center;
  padding-top: 3px;
}
.big .icon {
  height: 24px;
  margin-bottom: 1px;
}
.big .arrow {
  margin-top: 2px;
}
.row {
  height: 16px;
  display: flex;
  align-items: center;
}
.small,
.layer-tools,
.props {
  padding-top: 2px;
}
.small .label {
  margin-left: 3px;
}
.small .arrow {
  margin-left: 6px;
}
.disegna { width: 164px; }
.edita { width: 190px; }
.annotazione { width: 123px; }
.layer { width: 198px; }
.blocco { width: 109px; }
.proprieta { width: 197px; }
.gruppi { width: 50px; }
.utilita { width: 59px; }
.appunti { width: 58px; }
.vista { width: 40px; border-right: 0; }
.vista .panel-title { padding-right: 8px; }

.big-line { width: 28px; }
.big-polyline { width: 32px; }
.big-circle { width: 44px; }
.big-arc { width: 29px; }
.shapes { padding-left: 4px; }
.shapes .arrow { margin-left: 4px; }
.edit-a { width: 47px; padding-left: 4px; }
.edit-b { width: 55px; }
.edit-c { width: 65px; }
.big-text { width: 35px; }
.big-dim { width: 24px; }
.notes { padding-left: 3px; }
.big-layerprops { width: 38px; }
.big-insert { width: 33px; }
.blocks { padding-left: 1px; }
.big-matchprop { width: 61px; }
.big-group { width: 32px; }
.big-measure { width: 42px; }
.big-paste { width: 41px; }
.clips { padding-left: 1px; }
.big-base { width: 40px; }

.groups .row {
  width: 16px;
  box-sizing: border-box;
  padding-left: 2px;
}
.row.selected {
  height: 15px;
  background: #2d5572;
  outline: 1px solid #75a9d0;
  outline-offset: -1px;
}
.select {
  display: flex;
  align-items: center;
  box-sizing: border-box;
  background: #4b566a;
}
.select .arrow {
  margin: 0 1px 0 auto;
}
.swatch {
  width: 9px;
  height: 9px;
  background: #fff;
}
.layer-select {
  width: 138px;
  height: 14px;
  margin: 1px 0;
  padding-left: 3px;
  gap: 2px;
}
.layer-select .swatch {
  margin: 0 2px 0 3px;
}
.layer-tools .row {
  padding-left: 2px;
  gap: 4px;
}
.layer-tools .label {
  margin-left: -1px;
}
.props .row {
  gap: 3px;
}
.props .select {
  width: 118px;
  height: 12px;
}
.props .swatch {
  margin: 0 7px 0 8px;
}
.stroke {
  width: 43px;
  height: 1px;
  margin: 0 1px 0 1px;
  background: #dfe2e6;
}

/* drawing tabs */
.doc-tabs {
  box-sizing: border-box;
  height: 21px;
  padding: 4px 0 0 15px;
  display: flex;
  border-bottom: 2px solid #3b4453;
  margin: 0 2px;
}
.doc-tab {
  box-sizing: border-box;
  width: 82px;
  height: 15px;
  line-height: 15px;
  padding-left: 8px;
  background: #2e3541;
  color: #a5abb5;
  clip-path: polygon(5px 0, 78px 0, 100% 100%, 0 100%);
}
.doc-tab.current {
  width: 88px;
  padding: 0 12px 0 8px;
  display: flex;
  align-items: center;
  justify-content: space-between;
  background: #3b4453;
  color: #dfe2e6;
  clip-path: polygon(5px 0, 82px 0, 100% 100%, 0 100%);
}
.doc-tab.add {
  width: 16px;
  padding: 0;
  text-align: center;
  font-size: 11px;
  font-weight: 600;
  clip-path: polygon(0 0, 13px 0, 100% 100%, 3px 100%);
}

/* drawing area */
.canvas {
  position: relative;
  height: 552px;
  margin: 0 2px;
  border: solid #3b4453;
  border-width: 0 2px;
  box-sizing: border-box;
}
.view-label {
  position: absolute;
  left: 2px;
  top: 4px;
  letter-spacing: -0.28px;
}
.view-buttons {
  position: absolute;
  left: 1230px;
  top: 6px;
  display: flex;
  gap: 5.5px;
}
.model {
  position: absolute;
  left: 412px;
  top: 50px;
}
.viewcube {
  position: absolute;
  left: 1172px;
  top: 41px;
}
.navbar {
  position: absolute;
  left: 1248px;
  top: 157px;
}
.ucs {
  position: absolute;
  left: 10px;
  top: 481px;
}
.command {
  position: absolute;
  left: 256px;
  top: 522px;
  width: 761px;
}
.history {
  margin-left: 40px;
  width: 576px;
  height: 11px;
  line-height: 11px;
  background: #505356;
  color: #cdcfd1;
  font-family: "DejaVu Sans Mono", monospace;
  font-size: 7.5px;
  letter-spacing: 0.156px;
  text-indent: 1px;
}
.command-line {
  display: flex;
  height: 17px;
  margin-top: 2px;
}
.handle {
  width: 39px;
  display: flex;
  align-items: center;
  background: #2a303b;
}
.handle .icon {
  margin: 0 7px 0 3px;
}
.handle .icon + .icon {
  margin: 0;
}
.grip {
  width: 4px;
  height: 12px;
  margin-left: 1px;
  background: repeating-linear-gradient(#c6c9cd 0 1px, transparent 1px 2px);
}
.prompt {
  flex: 1;
  display: flex;
  align-items: center;
  padding: 0 3px 0 1px;
  background: #fff;
  color: #1b1b1b;
  font-family: "DejaVu Sans Mono", monospace;
  font-size: 7.5px;
  font-weight: 600;
  letter-spacing: 0.15px;
}
.prompt span {
  margin-left: 3px;
}
.up {
  margin-left: auto;
  border: 2px solid transparent;
  border-bottom-color: #333;
  border-top: 0;
}

/* layout tabs and hint */
.statusbar {
  height: 22px;
  margin: 0 2px;
  box-sizing: border-box;
  display: flex;
  justify-content: space-between;
  border: solid #3b4453;
  border-width: 1px 2px 2px;
  background: #222833;
}
.layout-tabs {
  display: flex;
  padding-left: 5px;
}
.layout-tab {
  width: 47px;
  height: 12px;
  line-height: 11px;
  text-align: center;
  background: #2e3541;
  color: #b5bac2;
  clip-path: polygon(0 0, 100% 0, 43px 100%, 5px 100%);
  margin-right: -3px;
}
.layout-tab.current {
  width: 51px;
  margin-right: -5px;
  background: #3b4453;
  color: #fff;
  font-weight: 700;
}
.layout-tab.plus {
  width: 20px;
  font-size: 11px;
  clip-path: polygon(0 0, 100% 0, 16px 100%, 5px 100%);
}
.hint {
  padding-right: 3px;
  line-height: 17px;
  color: #e5e7ea;
}

/* taskbar */
.taskbar {
  height: 26px;
  display: flex;
  background: #1c1e22;
}
.task {
  width: 31px;
  margin-right: 1.6px;
  box-sizing: border-box;
  display: flex;
  align-items: center;
  justify-content: center;
  border-bottom: 2px solid transparent;
}
.task:first-child {
  margin-right: 3.1px;
}
.task.open {
  width: 28px;
  margin: 0 3.1px 0 1.5px;
  border-color: #76b2e2;
}
.task.focused {
  width: 31px;
  margin: 0 1.6px 0 0;
  background: #45484c;
}
.tray {
  margin-left: auto;
  padding-right: 16px;
  display: flex;
  align-items: center;
  gap: 6px;
}
.clock {
  width: 41px;
  margin-right: 5px;
  display: flex;
  flex-direction: column;
  align-items: center;
  line-height: 11.5px;
  letter-spacing: -0.45px;
}
</style>
